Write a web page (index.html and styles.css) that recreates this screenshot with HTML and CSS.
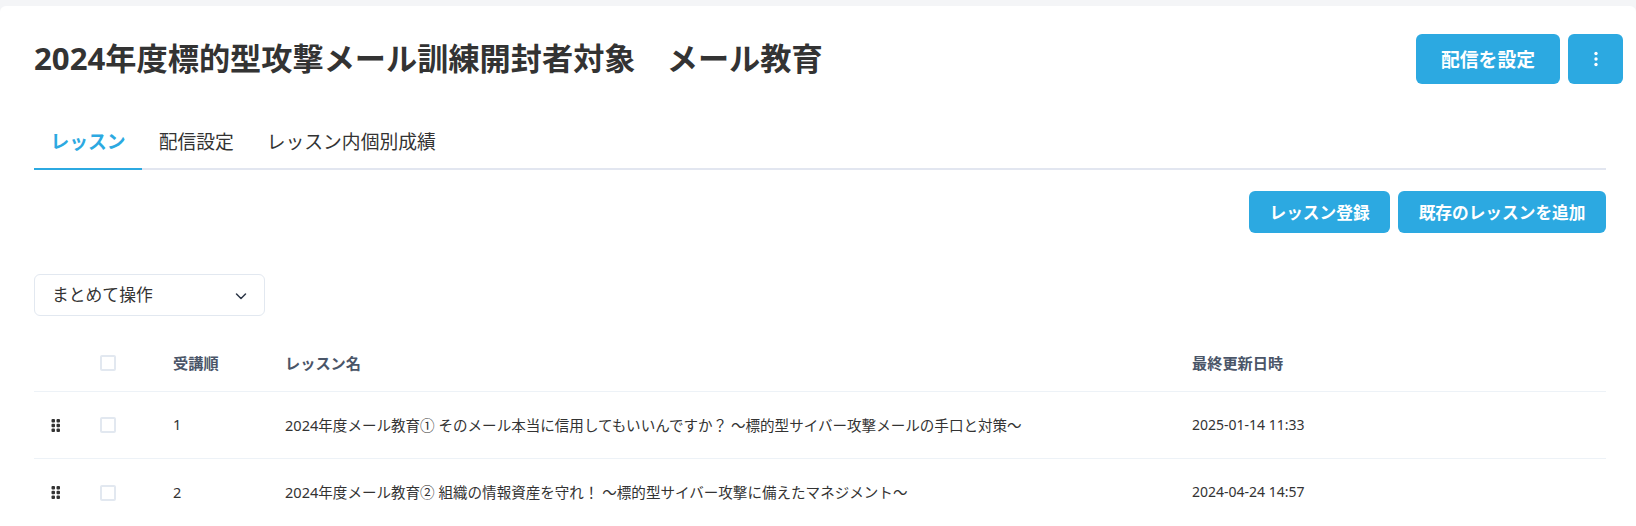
FILE: index.html
```html
<!DOCTYPE html>
<html lang="ja">
<head>
<meta charset="utf-8">
<title>メール教育</title>
<link rel="stylesheet" href="styles.css">
</head>
<body>
<main class="card">
  <header class="head">
    <h1 class="title">2024年度標的型攻撃メール訓練開封者対象　メール教育</h1>
    <div class="head-actions">
      <button class="btn btn-lg">配信を設定</button>
      <button class="btn btn-lg btn-icon" aria-label="メニュー">
        <svg width="4" height="16" viewBox="0 0 4 16"><circle cx="2" cy="2.500" r="1.700"/><circle cx="2" cy="8" r="1.700"/><circle cx="2" cy="13.500" r="1.700"/></svg>
      </button>
    </div>
  </header>
  <div class="content">
    <nav class="tabs">
      <a class="tab active">レッスン</a>
      <a class="tab">配信設定</a>
      <a class="tab">レッスン内個別成績</a>
    </nav>
    <div class="actions">
      <button class="btn btn-md">レッスン登録</button>
      <button class="btn btn-md">既存のレッスンを追加</button>
    </div>
    <div class="select">
      <span class="select-label">まとめて操作</span>
      <svg class="chevron" width="14" height="9" viewBox="0 0 14 9" fill="none"><path d="M2.500 2l4.500 4.500 4.500-4.500" stroke="#2d3748" stroke-width="1.500" stroke-linecap="round" stroke-linejoin="round"/></svg>
    </div>
    <div class="table">
      <div class="row row-head">
        <div class="c-grip"></div>
        <div class="c-check"><span class="check"></span></div>
        <div class="c-order">受講順</div>
        <div class="c-name">レッスン名</div>
        <div class="c-date">最終更新日時</div>
      </div>
      <div class="row">
        <div class="c-grip"><svg class="grip" width="10" height="13" viewBox="0 0 10 13"><rect x="0.500" y="0" width="3.500" height="3.500" rx="1"/><rect x="5.500" y="0" width="3.500" height="3.500" rx="1"/><rect x="0.500" y="4.700" width="3.500" height="3.500" rx="1"/><rect x="5.500" y="4.700" width="3.500" height="3.500" rx="1"/><rect x="0.500" y="9.400" width="3.500" height="3.500" rx="1"/><rect x="5.500" y="9.400" width="3.500" height="3.500" rx="1"/></svg></div>
        <div class="c-check"><span class="check"></span></div>
        <div class="c-order">1</div>
        <div class="c-name">2024年度メール教育① そのメール本当に信用してもいいんですか？ ～標的型サイバー攻撃メールの手口と対策～</div>
        <div class="c-date">2025-01-14 11:33</div>
      </div>
      <div class="row">
        <div class="c-grip"><svg class="grip" width="10" height="13" viewBox="0 0 10 13"><rect x="0.500" y="0" width="3.500" height="3.500" rx="1"/><rect x="5.500" y="0" width="3.500" height="3.500" rx="1"/><rect x="0.500" y="4.700" width="3.500" height="3.500" rx="1"/><rect x="5.500" y="4.700" width="3.500" height="3.500" rx="1"/><rect x="0.500" y="9.400" width="3.500" height="3.500" rx="1"/><rect x="5.500" y="9.400" width="3.500" height="3.500" rx="1"/></svg></div>
        <div class="c-check"><span class="check"></span></div>
        <div class="c-order">2</div>
        <div class="c-name">2024年度メール教育② 組織の情報資産を守れ！ ～標的型サイバー攻撃に備えたマネジメント～</div>
        <div class="c-date">2024-04-24 14:57</div>
      </div>
    </div>
  </div>
</main>
</body>
</html>
```
FILE: styles.css
```css
* { box-sizing: border-box; }
html, body { height: 100%; }
body {
  margin: 0;
  height: 526px;
  overflow: hidden;
  background: #f4f5f7;
  color: #333;
  font-family: "Noto Sans", "Noto Sans CJK JP", sans-serif;
  padding-top: 6px;
}
.card {
  background: #fff;
  border-radius: 6px 6px 0 0;
  height: 520px;
  overflow: hidden;
}
.head {
  display: flex;
  justify-content: space-between;
  align-items: flex-start;
  padding: 28px 13px 0 34px;
  height: 111px;
}
.title {
  margin: -1px 0 0;
  font-size: 31.2px;
  line-height: 50px;
  font-weight: 700;
  color: #333;
  white-space: nowrap;
}
.head-actions { display: flex; gap: 8px; }
.btn {
  border: 0;
  background: #2ca9e1;
  color: #fff;
  font-family: inherit;
  font-weight: 700;
  border-radius: 6px;
  padding: 0;
}
.btn-lg { height: 50px; width: 144px; font-size: 18.8px; }
.btn-icon { width: 55px; display: flex; align-items: center; justify-content: center; }
.btn-icon svg { fill: #fff; }
.btn-md { height: 42px; font-size: 16.7px; padding: 0 20.5px; }
.content { padding: 0 30px 0 34px; }
.tabs {
  display: flex;
  border-bottom: 2px solid #e2e6f0;
  height: 53px;
}
.tab {
  font-size: 18.8px;
  line-height: 26px;
  padding: 12px 16.5px 0;
  height: 53px;
  color: #333;
}
.tab.active {
  color: #2ca9e1;
  font-weight: 700;
  border-bottom: 2px solid #2ca9e1;
}
.actions {
  display: flex;
  justify-content: flex-end;
  gap: 8px;
  margin-top: 21px;
}
.select {
  display: flex;
  align-items: center;
  justify-content: space-between;
  width: 231px;
  height: 42px;
  margin-top: 41px;
  padding: 0 16px 0 17px;
  border: 1px solid #e2e8f0;
  border-radius: 6px;
  font-size: 16.8px;
  background: #fff;
}
.select-label { padding-bottom: 3px; }
.chevron { margin-top: 2px; }
.table { margin-top: 19px; }
.row {
  display: flex;
  align-items: center;
  height: 67px;
  border-bottom: 1px solid #edf2f7;
  font-size: 14.55px;
  color: #333;
}
.row:last-child { border-bottom: 0; }
.row-head {
  height: 57px;
  font-size: 15.2px;
  font-weight: 700;
  color: #4a5568;
}
.c-grip { width: 66px; padding-left: 17px; display: flex; }
.grip { fill: #333; }
.c-check { width: 73px; display: flex; }
.check {
  width: 16px;
  height: 16px;
  border: 2px solid #e2e8f0;
  border-radius: 2px;
  background: #fff;
}
.c-order { width: 112px; padding-bottom: 2px; }
.c-name { width: 907px; white-space: nowrap; padding-bottom: 2px; }
.c-date { white-space: nowrap; padding-bottom: 2px; font-size: 14px; }
.row-head .c-date { font-size: 15.2px; }
```
